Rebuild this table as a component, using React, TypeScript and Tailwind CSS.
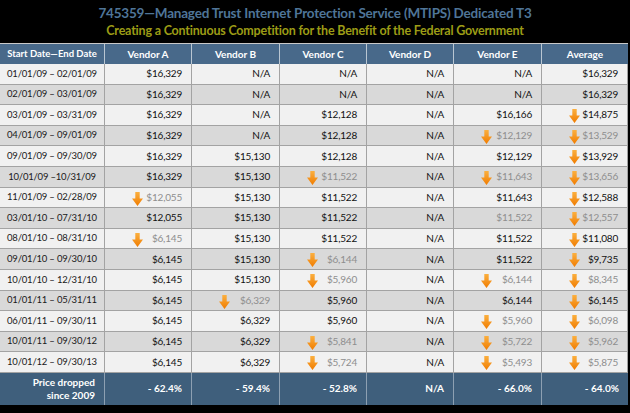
type Cell = { v: string; drop?: boolean; grey?: boolean };

// [value, flag] flags: "a" = arrow + grey, "b" = arrow + black, "g" = grey only
type Raw = [string, string?];

const ROWS: { date: string; cells: Raw[] }[] = [
  { date: "01/01/09 – 02/01/09", cells: [["$16,329"], ["N/A"], ["N/A"], ["N/A"], ["N/A"], ["$16,329"]] },
  { date: "02/01/09 – 03/01/09", cells: [["$16,329"], ["N/A"], ["N/A"], ["N/A"], ["N/A"], ["$16,329"]] },
  { date: "03/01/09 – 03/31/09", cells: [["$16,329"], ["N/A"], ["$12,128"], ["N/A"], ["$16,166"], ["$14,875", "b"]] },
  { date: "04/01/09 – 09/01/09", cells: [["$16,329"], ["N/A"], ["$12,128"], ["N/A"], ["$12,129", "a"], ["$13,529", "a"]] },
  { date: "09/01/09 – 09/30/09", cells: [["$16,329"], ["$15,130"], ["$12,128"], ["N/A"], ["$12,129"], ["$13,929", "b"]] },
  { date: "10/01/09 –10/31/09", cells: [["$16,329"], ["$15,130"], ["$11,522", "a"], ["N/A"], ["$11,643", "a"], ["$13,656", "a"]] },
  { date: "11/01/09 – 02/28/09", cells: [["$12,055", "a"], ["$15,130"], ["$11,522"], ["N/A"], ["$11,643"], ["$12,588", "b"]] },
  { date: "03/01/10 – 07/31/10", cells: [["$12,055"], ["$15,130"], ["$11,522"], ["N/A"], ["$11,522", "g"], ["$12,557", "a"]] },
  { date: "08/01/10 – 08/31/10", cells: [["$6,145", "a"], ["$15,130"], ["$11,522"], ["N/A"], ["$11,522"], ["$11,080", "b"]] },
  { date: "09/01/10 – 09/30/10", cells: [["$6,145"], ["$15,130"], ["$6,144", "a"], ["N/A"], ["$11,522"], ["$9,735", "b"]] },
  { date: "10/01/10 – 12/31/10", cells: [["$6,145"], ["$15,130"], ["$5,960", "a"], ["N/A"], ["$6,144", "a"], ["$8,345", "a"]] },
  { date: "01/01/11 – 05/31/11", cells: [["$6,145"], ["$6,329", "a"], ["$5,960"], ["N/A"], ["$6,144"], ["$6,145", "b"]] },
  { date: "06/01/11 – 09/30/11", cells: [["$6,145"], ["$6,329"], ["$5,960"], ["N/A"], ["$5,960", "a"], ["$6,098", "a"]] },
  { date: "10/01/11 – 09/30/12", cells: [["$6,145"], ["$6,329"], ["$5,841", "a"], ["N/A"], ["$5,722", "a"], ["$5,962", "a"]] },
  { date: "10/01/12 – 09/30/13", cells: [["$6,145"], ["$6,329"], ["$5,724", "a"], ["N/A"], ["$5,493", "a"], ["$5,875", "a"]] },
];

const HEADERS = ["Start Date—End Date", "Vendor A", "Vendor B", "Vendor C", "Vendor D", "Vendor E", "Average"];
const FOOTER = ["- 62.4%", "- 59.4%", "- 52.8%", "N/A", "- 66.0%", "- 64.0%"];

const toCell = ([v, f]: Raw): Cell => ({
  v,
  drop: f === "a" || f === "b",
  grey: f === "a" || f === "g",
});

function DownArrow() {
  return (
    <svg width="11" height="14" viewBox="0 0 11 14" className="absolute left-[27px] top-[4px]">
      <defs>
        <linearGradient id="arr" x1="0" y1="0" x2="0" y2="1">
          <stop offset="0" stopColor="#fbb040" />
          <stop offset="1" stopColor="#f07c00" />
        </linearGradient>
      </defs>
      <path d="M3.3 0 H7.7 V6.5 H11 L5.5 14 L0 6.5 H3.3 Z" fill="url(#arr)" />
    </svg>
  );
}

const GRID = "grid grid-cols-[105px_87px_88px_87px_87px_88px_86px]";

export default function App() {
  return (
    <div
      className="w-[630px] h-[413px] bg-black overflow-hidden"
      style={{ fontFamily: "Lato, 'Open Sans', sans-serif" }}
    >
      <div className="h-[43px] flex flex-col items-center justify-center font-bold leading-[18px]">
        <div className="text-[13.5px] text-[#4f7598] tracking-[-0.2px]">
          745359—Managed Trust Internet Protection Service (MTIPS) Dedicated T3
        </div>
        <div className="text-[12.5px] text-[#9c9c16] tracking-[-0.2px]">
          Creating a Continuous Competition for the Benefit of the Federal Government
        </div>
      </div>

      <div className="w-[628px]">
        <div className={`${GRID} h-[21px] bg-[#48698a] border-t border-[#c9c9c9]`}>
          {HEADERS.map((h, j) => (
            <div
              key={h}
              className={`flex items-center justify-center font-bold text-white border-r border-[#b9c6d2] last:border-r-0 ${
                j === 0 ? "text-[9.5px]" : "text-[10px]"
              }`}
            >
              {h}
            </div>
          ))}
        </div>

        {ROWS.map((r, i) => (
          <div
            key={r.date}
            className={`${GRID} h-[20.6px] text-[10px] tracking-[-0.2px] ${
              i % 2 === 0 ? "bg-[#f1f1f1]" : "bg-[#d9d9d9]"
            }`}
          >
            <div className="flex items-center justify-center text-[9.5px] text-[#1a1a1a] border-r border-b border-[#a3a3a3]">
              {r.date}
            </div>
            {r.cells.map(toCell).map((c, j) => (
              <div
                key={j}
                className={`relative flex items-center justify-end pr-[9px] border-r border-b border-[#a3a3a3] ${
                  c.grey ? "text-[#8e8e8e]" : "text-[#111]"
                }`}
              >
                {c.drop && <DownArrow />}
                {c.v}
              </div>
            ))}
          </div>
        ))}

        <div className={`${GRID} h-[32px] bg-[#3f5f7c] text-white font-bold text-[10px]`}>
          <div className="flex flex-col items-end justify-center pr-[9px] leading-[13px] border-r border-[#8da0b2]">
            <span>Price dropped</span>
            <span>since 2009</span>
          </div>
          {FOOTER.map((f, j) => (
            <div
              key={j}
              className="flex items-center justify-end pr-[9px] border-r border-[#8da0b2] last:border-r-0"
            >
              {f}
            </div>
          ))}
        </div>
      </div>
    </div>
  );
}
